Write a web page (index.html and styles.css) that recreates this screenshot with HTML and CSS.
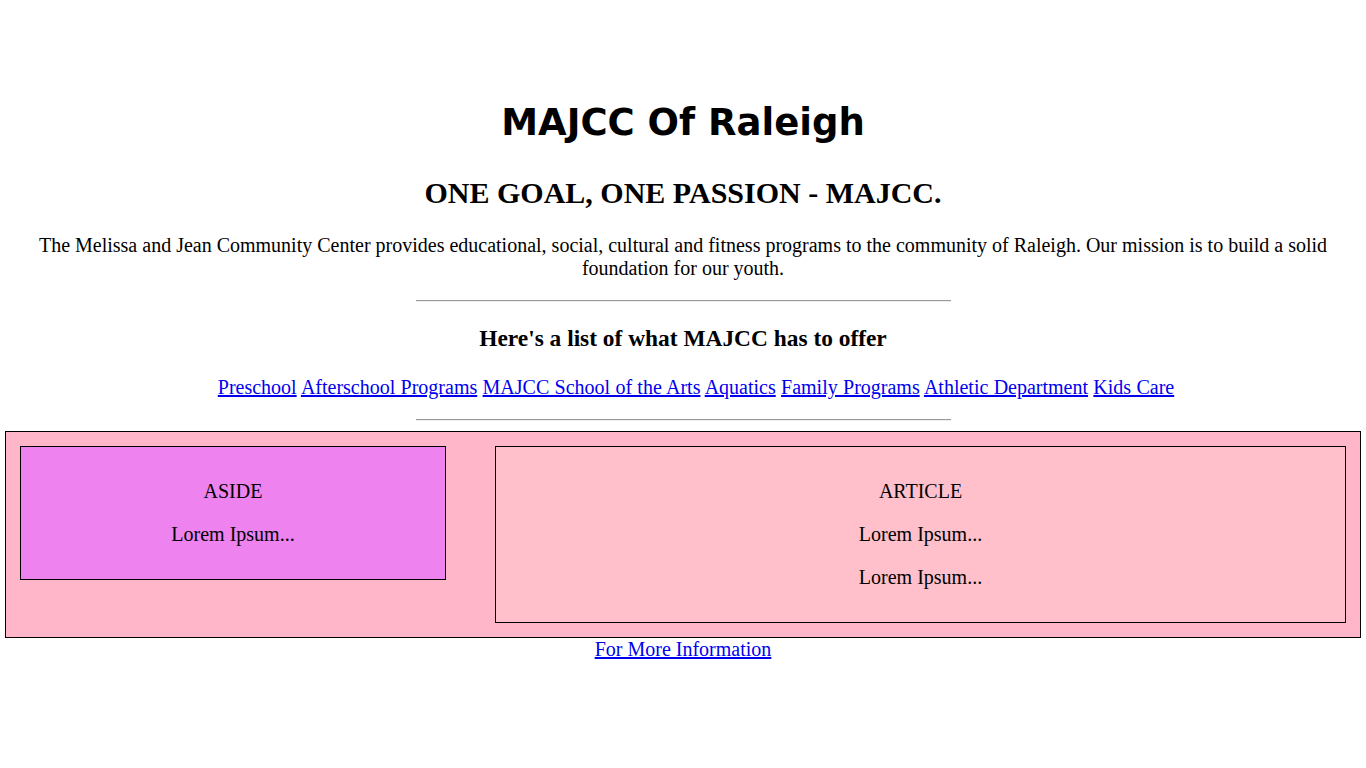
FILE: index.html
```html
<!DOCTYPE html>
<html lang="en">
<head>
<meta charset="utf-8">
<title>MAJCC Of Raleigh</title>
<link rel="stylesheet" href="styles.css">
</head>
<body>
<header class="site-header">
  <h1 class="title">MAJCC Of Raleigh</h1>
  <h2 class="slogan">ONE GOAL, ONE PASSION - MAJCC.</h2>
  <p class="intro">The Melissa and Jean Community Center provides educational, social, cultural and fitness programs to the community of Raleigh. Our mission is to build a solid foundation for our youth.</p>
  <hr class="rule">
  <h3 class="offer">Here's a list of what MAJCC has to offer</h3>
  <p class="nav">
    <a href="#">Preschool</a>
    <a href="#">Afterschool Programs</a>
    <a href="#">MAJCC School of the Arts</a>
    <a href="#">Aquatics</a>
    <a href="#">Family Programs</a>
    <a href="#">Athletic Department</a>
    <a href="#">Kids Care</a>
  </p>
  <hr class="rule">
</header>
<main class="content">
  <aside class="side">
    <p>ASIDE</p>
    <p>Lorem Ipsum...</p>
  </aside>
  <article class="article">
    <p>ARTICLE</p>
    <p>Lorem Ipsum...</p>
    <p>Lorem Ipsum...</p>
  </article>
</main>
<footer class="footer">
  <a href="#">For More Information</a>
</footer>
</body>
</html>
```
FILE: styles.css
```css
html, body {
  background: #ffffff;
}
body {
  margin: 0 5px;
  font-family: "Liberation Serif", "Times New Roman", serif;
  font-size: 20px;
  color: #000;
  text-align: center;
}
.site-header {
  padding-top: 70px;
}
.title {
  font-family: "Comic Sans MS", "DejaVu Sans", sans-serif;
  font-weight: bold;
  font-size: 37px;
  line-height: 52px;
  margin: 27px 0 27px;
}
.slogan {
  font-size: 30px;
  font-weight: bold;
  margin: 25px 0 24px;
}
.intro {
  margin: 20px 0;
  padding: 0 30px;
}
.rule {
  width: 535px;
  margin: 8px auto;
  border: 0;
  border-top: 1px solid #9a9a9a;
  border-bottom: 1px solid #eeeeee;
  height: 0;
}
.intro + .rule {
  margin-top: 20px;
}
.offer {
  font-size: 23.4px;
  font-weight: bold;
  margin: 23.4px 0;
}
.nav {
  margin: 20px 0;
  padding-left: 26px;
  word-spacing: 0.3px;
}
.nav + .rule {
  margin-top: 20px;
  margin-bottom: 10px;
}
a {
  color: #0000ee;
  text-decoration: underline;
}
.content {
  display: grid;
  grid-template-columns: 426px 1fr;
  column-gap: 49px;
  align-items: start;
  background: #ffb6c8;
  border: 1px solid #000;
  padding: 14px;
}
.side,
.article {
  border: 1px solid #000;
  padding: 13px 0;
}
.side p,
.article p {
  margin: 20px 0;
}
.side {
  background: #ee82ee;
}
.article {
  background: #ffc0cb;
}
.footer {
  margin: 0;
}
```
